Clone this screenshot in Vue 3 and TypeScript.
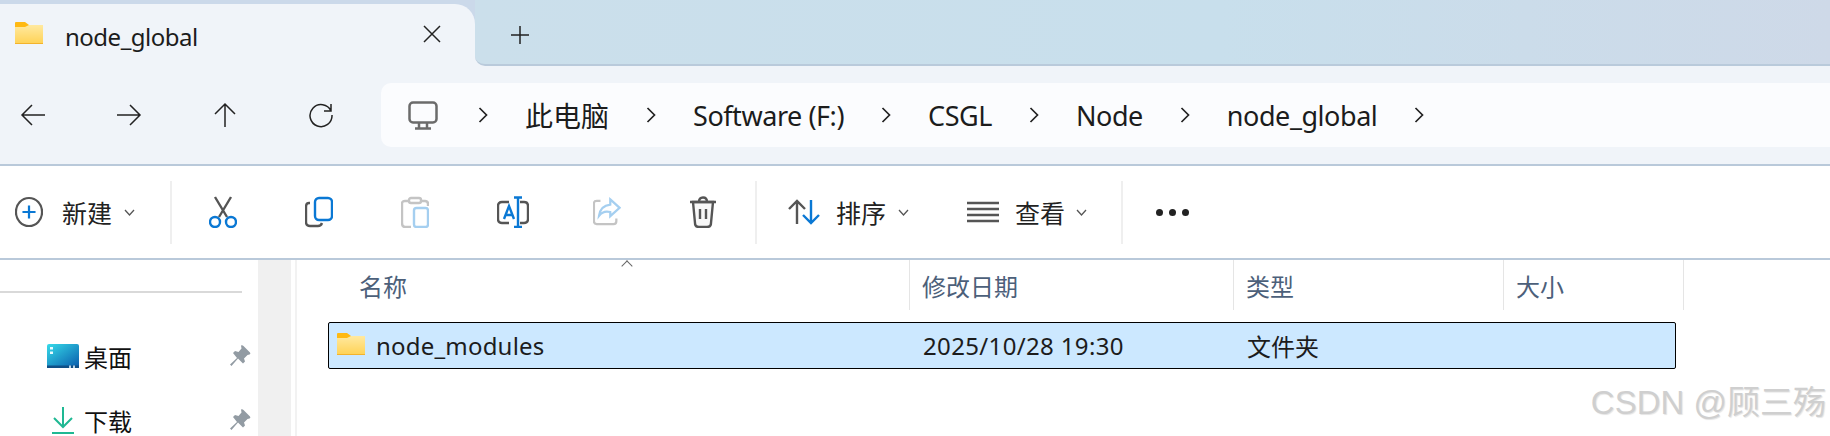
<template>
  <div class="explorer">
    <div class="titlebar">
      <div class="tab">
        <svg class="tab-folder" viewBox="0 0 28 22"><use href="#folder-icon" /></svg>
        <span class="tab-title">node_global</span>
        <svg class="tab-close" viewBox="0 0 18 18"><path d="M1 1 17 17M17 1 1 17" /></svg>
      </div>
      <div class="strip">
        <svg class="tab-add" viewBox="0 0 20 20"><path d="M10 1V19M1 10H19" /></svg>
      </div>
    </div>

    <div class="navbar">
      <div class="nav-btns">
        <svg class="nav-icon" viewBox="0 0 26 26"><path d="M25 13H2M12 3 2 13 12 23" /></svg>
        <svg class="nav-icon" viewBox="0 0 26 26"><path d="M1 13H24M14 3 24 13 14 23" /></svg>
        <svg class="nav-icon" viewBox="0 0 26 26"><path d="M13 25V2M3 12 13 2 23 12" /></svg>
        <svg class="nav-icon" viewBox="0 0 26 26"><path d="M23 9A11 11 0 1 0 24 13M23 2V9H16" /></svg>
      </div>
      <div class="address">
        <svg class="pc-icon" viewBox="0 0 30 29">
          <rect x="1.5" y="1.5" width="27" height="20" rx="3.5" />
          <path d="M11 22V27M19 22V27M7 27.5H23" />
        </svg>
        <template v-for="crumb in crumbs" :key="crumb.label">
          <svg class="crumb-chevron" viewBox="0 0 10 16"><path d="M1.5 1 8.5 8 1.5 15" /></svg>
          <span class="crumb" :class="{ cjk: crumb.cjk }">{{ crumb.label }}</span>
        </template>
        <svg class="crumb-chevron" viewBox="0 0 10 16"><path d="M1.5 1 8.5 8 1.5 15" /></svg>
      </div>
    </div>

    <div class="commandbar">
      <div class="cmd-new">
        <svg class="cmd-icon" viewBox="0 0 30 32">
          <ellipse cx="15" cy="16" rx="14" ry="15" class="dark" />
          <path d="M15 9V23M8 16H22" class="blue" />
        </svg>
        <span class="cmd-label new-label">新建</span>
        <svg class="cmd-chevron" viewBox="0 0 11 7"><path d="M1 1 5.5 6 10 1" /></svg>
      </div>
      <div class="cmd-sep"></div>
      <div class="cmd-tools">
        <svg class="cmd-icon" viewBox="0 0 28 32">
          <path d="M6 1 18 21M22 1 10 21" class="dark" />
          <circle cx="6" cy="26" r="5" class="blue" />
          <circle cx="22" cy="26" r="5" class="blue" />
        </svg>
        <svg class="cmd-icon" viewBox="0 0 28 30">
          <path d="M5 6H4Q1 6 1 10V25Q1 29 5 29H13Q16 29 17 26" class="dark" />
          <rect x="10" y="1" width="17" height="22" rx="4" class="blue" />
        </svg>
        <svg class="cmd-icon faded" viewBox="0 0 28 32">
          <path d="M8 5H4Q1 5 1 8V27Q1 31 4 31H10M20 5H24Q27 5 27 8V10" class="grey" />
          <rect x="8" y="2" width="12" height="5" rx="2" class="grey" />
          <rect x="13" y="12" width="14" height="19" rx="2.5" class="light-blue" />
        </svg>
        <svg class="cmd-icon rename" viewBox="0 0 32 32">
          <path d="M12 6H5Q1 6 1 10V23Q1 27 5 27H12M23 6H27Q31 6 31 10V23Q31 27 27 27H23" class="dark" />
          <path d="M7 23 12 10 17 23M9 19H15" class="blue" />
          <path d="M21 2V31M17 1.500H25M17 31H25" class="blue" />
        </svg>
        <svg class="cmd-icon faded" viewBox="0 0 30 30">
          <path d="M8 3H4Q1 3 1 6V25Q1 28 4 28H22Q25 28 25 25V22" class="grey" />
          <path d="M18.500 1.500 28.500 10.500 18.500 19.500V15Q11 13 6.500 19Q8 8 18.500 7Z" class="light-blue" />
        </svg>
        <svg class="cmd-icon" viewBox="0 0 28 32">
          <path d="M4 6 6 27Q6 31 10 31H18Q22 31 22 27L24 6Z" class="dark trash-body" />
          <path d="M1 6H27M10 6Q10 1.500 14 1.500T18 6" class="dark" />
          <path d="M11 13V23M17 13V23" class="dark" />
        </svg>
      </div>
      <div class="cmd-sep"></div>
      <div class="cmd-sort">
        <svg class="cmd-icon sort-icon" viewBox="0 0 32 26">
          <path d="M9 25V2M1 10 9 2 17 10" class="dark" />
          <path d="M23 1V24M15 16 23 24 31 16" class="blue" />
        </svg>
        <span class="cmd-label">排序</span>
        <svg class="cmd-chevron" viewBox="0 0 11 7"><path d="M1 1 5.5 6 10 1" /></svg>
      </div>
      <div class="cmd-view">
        <svg class="cmd-icon view-icon" viewBox="0 0 32 22">
          <path d="M0 2H32M0 8H32M0 14H32M0 20H32" class="dark" />
        </svg>
        <span class="cmd-label">查看</span>
        <svg class="cmd-chevron" viewBox="0 0 11 7"><path d="M1 1 5.5 6 10 1" /></svg>
      </div>
      <div class="cmd-sep"></div>
      <div class="cmd-more">
        <span></span><span></span><span></span>
      </div>
    </div>

    <div class="body">
      <aside class="sidebar">
        <div class="side-divider"></div>
        <div class="side-row">
          <svg class="side-icon" viewBox="0 0 32 24">
            <defs>
              <linearGradient id="desk" x1="0" y1="0" x2="1" y2="1">
                <stop offset="0" stop-color="#36dbe9" />
                <stop offset="1" stop-color="#0a5fae" />
              </linearGradient>
            </defs>
            <path d="M2 0H30Q32 0 32 2V22H0V2Q0 0 2 0Z" fill="url(#desk)" />
            <rect y="21.500" width="32" height="2.500" fill="#0f4f86" />
            <rect x="3" y="3" width="3" height="2.500" fill="#e8fbff" />
            <rect x="3" y="7.500" width="3" height="2.500" fill="#e8fbff" />
            <rect x="22" y="21.500" width="2" height="2.500" fill="#b8d4e8" />
            <rect x="26" y="21.500" width="2" height="2.500" fill="#b8d4e8" />
          </svg>
          <span class="side-label">桌面</span>
          <svg class="pin" viewBox="0 0 21 22"><use href="#pin-icon" /></svg>
        </div>
        <div class="side-row">
          <svg class="side-icon down" viewBox="0 0 22 28">
            <path d="M11 1V21M2 12 11 21 20 12M0 27H22" />
          </svg>
          <span class="side-label">下载</span>
          <svg class="pin" viewBox="0 0 21 22"><use href="#pin-icon" /></svg>
        </div>
      </aside>
      <div class="scroll-track"></div>
      <div class="files">
        <span class="sort-caret"></span>
        <div class="file-head">
          <div v-for="col in columns" :key="col" class="head-cell">{{ col }}</div>
        </div>
        <div class="file-row">
          <div class="name-cell">
            <svg class="row-folder" viewBox="0 0 28 22"><use href="#folder-icon" /></svg>
            <span class="file-name">node_modules</span>
          </div>
          <div class="row-cell date-cell">2025/10/28 19:30</div>
          <div class="row-cell">文件夹</div>
        </div>
      </div>
    </div>

    <div class="watermark">CSDN @顾三殇</div>

    <svg class="defs" width="0" height="0">
      <defs>
        <linearGradient id="folder-fill" x1="0" y1="0" x2="0" y2="1">
          <stop offset="0" stop-color="#ffe9a0" />
          <stop offset="1" stop-color="#ffd254" />
        </linearGradient>
        <g id="folder-icon">
          <path d="M1 0H10L14 3H28V8H0V1Q0 0 1 0Z" fill="#ffb912" />
          <path d="M0 5H10L14 3H28V21Q28 22 27 22H1Q0 22 0 21Z" fill="url(#folder-fill)" />
          <rect y="21" width="28" height="1" fill="#f3b32c" />
        </g>
        <g id="pin-icon">
          <path d="M11 .5Q12.500 0 13.500 1L20 7.500Q21 9 19.500 9.500L17.500 10 14 13.500 15 16.500 13 18.500 8 13.500 1.500 21 0 19.500 7 13 3 8 5 6 8.500 7 11.500 3.500Z" fill="#929ba3" />
        </g>
      </defs>
    </svg>
  </div>
</template>

<script setup lang="ts">
const crumbs = [
  { label: '此电脑', cjk: true },
  { label: 'Software (F:)', cjk: false },
  { label: 'CSGL', cjk: false },
  { label: 'Node', cjk: false },
  { label: 'node_global', cjk: false }
]

const columns = ['名称', '修改日期', '类型', '大小']
</script>

<style>
html,
body {
  margin: 0;
  background: #fff;
}
</style>

<style scoped>
.explorer {
  position: relative;
  width: 1830px;
  height: 436px;
  overflow: hidden;
  background: #fff;
  color: #1c1c1c;
  font-family: "Noto Sans", "Noto Sans CJK SC", sans-serif;
}
.defs {
  position: absolute;
}
svg {
  display: block;
  flex: none;
  fill: none;
}

.titlebar {
  display: flex;
  height: 66px;
  box-sizing: border-box;
  padding-top: 4px;
  background: #cbd9ea;
}
.tab {
  position: relative;
  display: flex;
  align-items: center;
  width: 475px;
  padding-left: 15px;
  box-sizing: border-box;
  border-radius: 0 20px 0 0;
  background: #f0f4f9;
}
.tab::after {
  content: "";
  position: absolute;
  right: -12px;
  bottom: 0;
  width: 12px;
  height: 12px;
  background: #f0f4f9;
}
.tab-folder {
  width: 28px;
  height: 22px;
  margin-top: -4px;
}
.tab-title {
  margin-left: 22px;
  margin-top: 2px;
  font-size: 24px;
  letter-spacing: -0.5px;
}
.tab-close {
  width: 18px;
  height: 18px;
  margin-left: 225px;
  margin-top: -3px;
  stroke: #222;
  stroke-width: 1.5;
}
.strip {
  position: relative;
  z-index: 1;
  flex: 1;
  display: flex;
  align-items: center;
  margin-top: -4px;
  padding-left: 35px;
  border-bottom: 2px solid #b9cadb;
  border-bottom-left-radius: 10px;
  background: linear-gradient(90deg, #cbdfeb, #c8dfec 55%, #ced9e8);
}
.tab-add {
  width: 20px;
  height: 20px;
  margin-top: 6px;
  stroke: #222;
  stroke-width: 1.5;
}

.navbar {
  display: flex;
  align-items: center;
  height: 100px;
  box-sizing: border-box;
  border-bottom: 2px solid #b9c9da;
  background: #f0f4f9;
}
.nav-btns {
  display: flex;
  gap: 70px;
  width: 381px;
  padding-left: 20px;
  box-sizing: border-box;
}
.nav-icon {
  width: 26px;
  height: 26px;
  stroke: #222;
  stroke-width: 1.5;
}
.address {
  flex: 1;
  display: flex;
  align-items: center;
  gap: 37px;
  height: 64px;
  padding-left: 27px;
  border-radius: 10px 0 0 10px;
  background: #fbfcfe;
}
.pc-icon {
  width: 30px;
  height: 29px;
  margin-right: 3px;
  stroke: #6b6b6b;
  stroke-width: 2.5;
}
.crumb-chevron {
  width: 10px;
  height: 16px;
  stroke: #222;
  stroke-width: 1.7;
}
.crumb {
  font-size: 27px;
  letter-spacing: -0.45px;
}
.crumb.cjk {
  font-size: 28px;
  letter-spacing: 0;
}

.commandbar {
  display: flex;
  align-items: center;
  height: 94px;
  box-sizing: border-box;
  border-bottom: 2px solid #b9c9da;
}
.cmd-new {
  display: flex;
  align-items: center;
  width: 170px;
  padding-left: 15px;
  box-sizing: border-box;
}
.cmd-sep {
  flex: none;
  width: 2px;
  height: 63px;
  background: #efefef;
}
.cmd-tools {
  display: flex;
  align-items: center;
  gap: 68px;
  width: 583px;
  padding-left: 37px;
  box-sizing: border-box;
}
.cmd-icon {
  width: 28px;
  height: 32px;
  stroke-width: 2.4;
}
.cmd-icon.rename {
  width: 32px;
  margin-right: -4px;
}
.cmd-icon .dark {
  stroke: #555;
}
.cmd-icon .trash-body {
  fill: #f8f8f8;
}
.cmd-icon .blue {
  stroke: #0a78d4;
}
.cmd-icon .grey {
  stroke: #c4c4c4;
}
.cmd-icon .light-blue {
  stroke: #a5cff0;
}
.cmd-label {
  margin-left: 16px;
  font-size: 25px;
  color: #222;
}
.new-label {
  margin-left: 19px;
}
.cmd-chevron {
  width: 11px;
  height: 7px;
  margin-left: 12px;
  stroke: #555;
  stroke-width: 1.3;
}
.cmd-view .cmd-chevron {
  margin-left: 11px;
}
.cmd-sort {
  display: flex;
  align-items: center;
  width: 178px;
  padding-left: 31px;
  box-sizing: border-box;
}
.sort-icon {
  width: 32px;
  height: 26px;
}
.cmd-view {
  display: flex;
  align-items: center;
  width: 186px;
  padding-left: 32px;
  box-sizing: border-box;
}
.view-icon {
  width: 32px;
  height: 22px;
}
.cmd-more {
  display: flex;
  gap: 6px;
  padding-left: 33px;
}
.cmd-more span {
  width: 7px;
  height: 7px;
  border-radius: 50%;
  background: #222;
}

.body {
  display: flex;
  height: 176px;
}
.sidebar {
  flex: none;
  width: 258px;
  overflow: hidden;
  padding-top: 31px;
  box-sizing: border-box;
}
.side-divider {
  width: 242px;
  height: 2px;
  margin-bottom: 31px;
  background: #d9d9d9;
}
.side-row {
  display: flex;
  align-items: center;
  height: 64px;
  padding-left: 47px;
}
.side-icon {
  width: 32px;
  height: 24px;
}
.side-icon.down {
  width: 22px;
  height: 28px;
  margin: 0 5px;
  stroke: #1fb893;
  stroke-width: 2;
}
.side-label {
  margin-left: 5px;
  width: 146px;
  font-size: 24px;
  color: #111;
}
.pin {
  width: 21px;
  height: 22px;
}
.scroll-track {
  flex: none;
  width: 33px;
  background: #f0f0f0;
}
.files {
  position: relative;
  flex: 1;
  margin-left: 4px;
  border-left: 2px solid #f2f2f2;
}
.sort-caret {
  position: absolute;
  left: 326px;
  top: 0;
  width: 7px;
  height: 7px;
  border-left: 1.5px solid #666;
  border-top: 1.5px solid #666;
  transform: translateY(2px) rotate(45deg);
}
.file-head {
  display: grid;
  grid-template-columns: 613px 324px 270px 180px;
  height: 50px;
}
.head-cell {
  display: flex;
  align-items: center;
  padding-left: 12px;
  border-right: 1px solid #e5e5e5;
  font-size: 24px;
  color: #4c607a;
}
.head-cell:first-child {
  padding-left: 62px;
}
.file-row {
  display: grid;
  grid-template-columns: 582px 324px 1fr;
  align-items: center;
  width: 1348px;
  height: 47px;
  margin: 12px 0 0 31px;
  box-sizing: border-box;
  border: 1.5px solid #000;
  border-radius: 2px;
  background: #cce8ff;
  font-size: 24px;
}
.name-cell {
  display: flex;
  align-items: center;
  gap: 11px;
  padding-left: 8px;
}
.file-name {
  letter-spacing: 0.2px;
}
.date-cell {
  letter-spacing: 0.35px;
}
.row-folder {
  width: 28px;
  height: 22px;
  margin-top: -4px;
}
.row-cell {
  padding-left: 12px;
}

.watermark {
  position: absolute;
  right: 4px;
  bottom: 15px;
  font-family: "Liberation Sans", "Noto Sans CJK SC", sans-serif;
  font-size: 33px;
  line-height: 36px;
  color: #cfcfcf;
  text-shadow: 1px 1px 1px #e4e4e4;
}
</style>
